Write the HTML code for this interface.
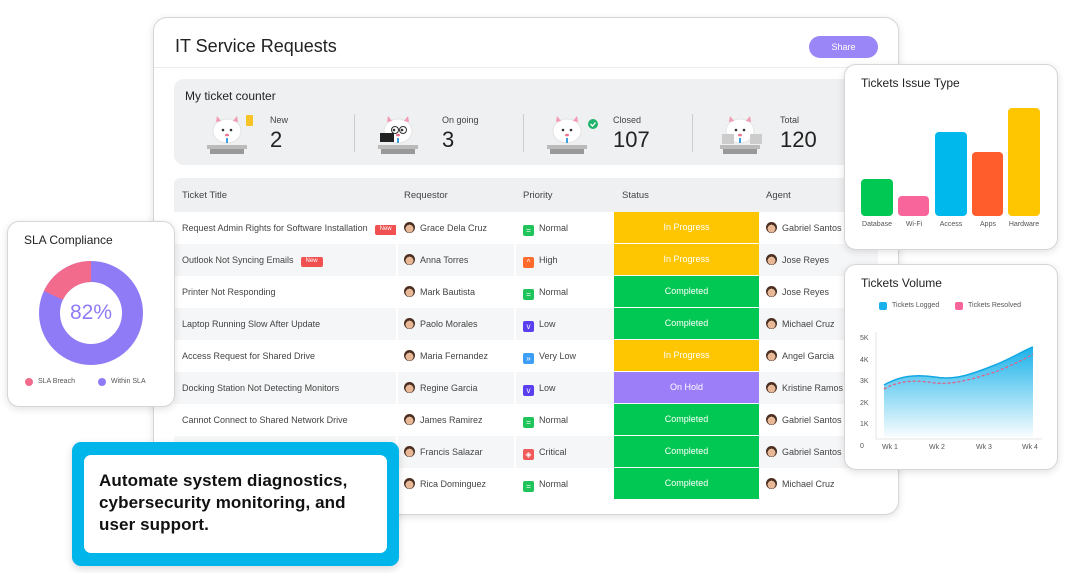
<!DOCTYPE html>
<html><head><meta charset="utf-8"><style>
*{margin:0;padding:0;box-sizing:border-box}
body{width:1065px;height:573px;background:#fff;font-family:"Liberation Sans",sans-serif;position:relative;overflow:hidden;color:#323338}
.abs{position:absolute}
.card{position:absolute;background:#fff;border:1px solid #d6d6d8;border-radius:12px;box-shadow:0 2px 8px rgba(0,0,0,.12)}
.row{position:absolute;left:174px;width:704px;height:32px;font-size:9px;color:#444}
.row.alt{background:#f5f6f7}
.cell{position:absolute;top:0;height:32px;line-height:32px;white-space:nowrap}
.st{position:absolute;left:440px;width:145px;height:31px;top:0;line-height:31px;text-align:center;color:#fff;font-size:9px}
.av{display:inline-block;width:11px;height:11px;border-radius:50%;vertical-align:-2px;margin-right:5px;background:radial-gradient(circle at 50% 60%,#e8b896 0 45%,#4a2e22 46%)}
.pi{display:inline-block;width:11px;height:11px;border-radius:2px;vertical-align:-2px;margin-right:5px;color:#fff;font-size:8px;line-height:11px;text-align:center}
.new{display:inline-block;background:#f0504f;color:#fff;font-size:6px;line-height:9px;height:10px;padding:0 5px;border-radius:2px;margin-left:7px;vertical-align:1px}
.sep{position:absolute;top:0;width:2px;height:32px;background:#fff}
</style></head><body>

<div class="card" style="left:153px;top:17px;width:746px;height:498px;border-radius:14px"></div>
<div class="abs" style="left:175px;top:36px;font-size:18px;color:#222">IT Service Requests</div>
<div class="abs" style="left:809px;top:36px;width:69px;height:22px;border-radius:11px;background:#9b86f7;color:#fff;font-size:9px;line-height:22px;text-align:center">Share</div>
<div class="abs" style="left:154px;top:67px;width:744px;height:1px;background:#ececee"></div>

<div class="abs" style="left:174px;top:79px;width:700px;height:86px;background:#eff0f1;border-radius:10px"></div>
<div class="abs" style="left:185px;top:89px;font-size:12px;color:#222">My ticket counter</div>
<div class="abs" style="left:354px;top:114px;width:1px;height:38px;background:#ccc"></div>
<div class="abs" style="left:523px;top:114px;width:1px;height:38px;background:#ccc"></div>
<div class="abs" style="left:692px;top:114px;width:1px;height:38px;background:#ccc"></div>

<svg class="abs" style="left:0;top:0" width="1065" height="573">
 <defs><g id="m">
  <ellipse cx="22" cy="18" rx="14" ry="12" fill="#fff" stroke="#e4e4e4"/>
  <path d="M11 9 L12 3 L16 8Z M33 9 L32 3 L28 8Z" fill="#f39ab3"/>
  <circle cx="18" cy="17" r="1.3" fill="#333"/><circle cx="26" cy="17" r="1.3" fill="#333"/>
  <ellipse cx="22" cy="22" rx="2" ry="1.3" fill="#f07090"/>
  <rect x="21" y="25" width="2" height="5" fill="#3aa0e0"/>
  <rect x="2" y="32" width="40" height="4" fill="#bbb"/>
  <rect x="5" y="36" width="34" height="5" fill="#999"/>
 </g></defs>
 <use href="#m" x="205" y="113"/>
 <rect x="246" y="115" width="7" height="11" rx="1" fill="#f7c325"/>
 <use href="#m" x="376" y="113"/>
 <rect x="380" y="133" width="14" height="9" fill="#222"/>
 <circle cx="395" cy="130" r="3.5" fill="none" stroke="#333"/><circle cx="403" cy="130" r="3.5" fill="none" stroke="#333"/>
 <use href="#m" x="545" y="113"/>
 <circle cx="593" cy="124" r="5" fill="#1fb36b"/><path d="M590.5 124l2 2 3-3.5" stroke="#fff" stroke-width="1.3" fill="none"/>
 <use href="#m" x="718" y="113"/>
 <rect x="722" y="134" width="12" height="10" fill="#ccc"/><rect x="750" y="134" width="12" height="10" fill="#ccc"/>
</svg>
<div class="abs" style="left:270px;top:115px;font-size:9px;color:#444">New</div>
<div class="abs" style="left:270px;top:127px;font-size:22px;color:#222">2</div>
<div class="abs" style="left:442px;top:115px;font-size:9px;color:#444">On going</div>
<div class="abs" style="left:442px;top:127px;font-size:22px;color:#222">3</div>
<div class="abs" style="left:613px;top:115px;font-size:9px;color:#444">Closed</div>
<div class="abs" style="left:613px;top:127px;font-size:22px;color:#222">107</div>
<div class="abs" style="left:780px;top:115px;font-size:9px;color:#444">Total</div>
<div class="abs" style="left:780px;top:127px;font-size:22px;color:#222">120</div>

<div class="abs" style="left:174px;top:178px;width:704px;height:34px;background:#eff0f1;border-radius:6px 6px 0 0;font-size:9.5px;color:#444">
 <span class="abs" style="left:8px;top:12px">Ticket Title</span>
 <span class="abs" style="left:230px;top:12px">Requestor</span>
 <span class="abs" style="left:349px;top:12px">Priority</span>
 <span class="abs" style="left:448px;top:12px">Status</span>
 <span class="abs" style="left:592px;top:12px">Agent</span>
</div>

<div class="row" style="top:212px"><div class="cell" style="left:8px">Request Admin Rights for Software Installation<span class="new">New</span></div><div class="sep" style="left:222px"></div><div class="cell" style="left:230px"><span class="av"></span>Grace Dela Cruz</div><div class="sep" style="left:340px"></div><div class="cell" style="left:349px"><span class="pi" style="background:#1fc45a">=</span>Normal</div><div class="st" style="background:#fdc600">In Progress</div><div class="cell" style="left:592px"><span class="av"></span>Gabriel Santos</div></div>
<div class="row alt" style="top:244px"><div class="cell" style="left:8px">Outlook Not Syncing Emails<span class="new">New</span></div><div class="sep" style="left:222px"></div><div class="cell" style="left:230px"><span class="av"></span>Anna Torres</div><div class="sep" style="left:340px"></div><div class="cell" style="left:349px"><span class="pi" style="background:#ff6a2c">^</span>High</div><div class="st" style="background:#fdc600">In Progress</div><div class="cell" style="left:592px"><span class="av"></span>Jose Reyes</div></div>
<div class="row" style="top:276px"><div class="cell" style="left:8px">Printer Not Responding</div><div class="sep" style="left:222px"></div><div class="cell" style="left:230px"><span class="av"></span>Mark Bautista</div><div class="sep" style="left:340px"></div><div class="cell" style="left:349px"><span class="pi" style="background:#1fc45a">=</span>Normal</div><div class="st" style="background:#00c853">Completed</div><div class="cell" style="left:592px"><span class="av"></span>Jose Reyes</div></div>
<div class="row alt" style="top:308px"><div class="cell" style="left:8px">Laptop Running Slow After Update</div><div class="sep" style="left:222px"></div><div class="cell" style="left:230px"><span class="av"></span>Paolo Morales</div><div class="sep" style="left:340px"></div><div class="cell" style="left:349px"><span class="pi" style="background:#5a3ff0">v</span>Low</div><div class="st" style="background:#00c853">Completed</div><div class="cell" style="left:592px"><span class="av"></span>Michael Cruz</div></div>
<div class="row" style="top:340px"><div class="cell" style="left:8px">Access Request for Shared Drive</div><div class="sep" style="left:222px"></div><div class="cell" style="left:230px"><span class="av"></span>Maria Fernandez</div><div class="sep" style="left:340px"></div><div class="cell" style="left:349px"><span class="pi" style="background:#3d9ef5">»</span>Very Low</div><div class="st" style="background:#fdc600">In Progress</div><div class="cell" style="left:592px"><span class="av"></span>Angel Garcia</div></div>
<div class="row alt" style="top:372px"><div class="cell" style="left:8px">Docking Station Not Detecting Monitors</div><div class="sep" style="left:222px"></div><div class="cell" style="left:230px"><span class="av"></span>Regine Garcia</div><div class="sep" style="left:340px"></div><div class="cell" style="left:349px"><span class="pi" style="background:#5a3ff0">v</span>Low</div><div class="st" style="background:#9b7ef8">On Hold</div><div class="cell" style="left:592px"><span class="av"></span>Kristine Ramos</div></div>
<div class="row" style="top:404px"><div class="cell" style="left:8px">Cannot Connect to Shared Network Drive</div><div class="sep" style="left:222px"></div><div class="cell" style="left:230px"><span class="av"></span>James Ramirez</div><div class="sep" style="left:340px"></div><div class="cell" style="left:349px"><span class="pi" style="background:#1fc45a">=</span>Normal</div><div class="st" style="background:#00c853">Completed</div><div class="cell" style="left:592px"><span class="av"></span>Gabriel Santos</div></div>
<div class="row alt" style="top:436px"><div class="sep" style="left:222px"></div><div class="cell" style="left:230px"><span class="av"></span>Francis Salazar</div><div class="sep" style="left:340px"></div><div class="cell" style="left:349px"><span class="pi" style="background:#f05a5a">◈</span>Critical</div><div class="st" style="background:#00c853">Completed</div><div class="cell" style="left:592px"><span class="av"></span>Gabriel Santos</div></div>
<div class="row" style="top:468px"><div class="sep" style="left:222px"></div><div class="cell" style="left:230px"><span class="av"></span>Rica Dominguez</div><div class="sep" style="left:340px"></div><div class="cell" style="left:349px"><span class="pi" style="background:#1fc45a">=</span>Normal</div><div class="st" style="background:#00c853">Completed</div><div class="cell" style="left:592px"><span class="av"></span>Michael Cruz</div></div>

<div class="card" style="left:7px;top:221px;width:168px;height:186px"></div>
<div class="abs" style="left:24px;top:233px;font-size:12px;color:#222">SLA Compliance</div>
<svg class="abs" style="left:0;top:0" width="200" height="420">
 <circle cx="91" cy="313" r="41.5" fill="none" stroke="#8f7bf5" stroke-width="21"/>
 <circle cx="91" cy="313" r="41.5" fill="none" stroke="#f26b8c" stroke-width="21" stroke-dasharray="47 300" transform="rotate(-155 91 313)"/>
 <circle cx="29" cy="382" r="4" fill="#f26b8c"/><circle cx="102" cy="382" r="4" fill="#8f7bf5"/>
</svg>
<div class="abs" style="left:60px;top:301px;width:62px;text-align:center;font-size:21px;color:#8f7bf5">82%</div>
<div class="abs" style="left:38px;top:378px;font-size:7px;color:#555">SLA Breach</div>
<div class="abs" style="left:111px;top:378px;font-size:7px;color:#555">Within SLA</div>

<div class="card" style="left:844px;top:64px;width:214px;height:186px"></div>
<div class="abs" style="left:861px;top:76px;font-size:12px;color:#222">Tickets Issue Type</div>
<svg class="abs" style="left:0;top:0" width="1065" height="573">
 <rect x="861" y="179" width="32" height="37" rx="4" fill="#00c853"/>
 <rect x="898" y="196" width="31" height="20" rx="4" fill="#f7659a"/>
 <rect x="935" y="132" width="32" height="84" rx="4" fill="#00b8ec"/>
 <rect x="972" y="152" width="31" height="64" rx="4" fill="#ff5e2c"/>
 <rect x="1008" y="108" width="32" height="108" rx="4" fill="#fdc600"/>
</svg>
<div class="abs" style="left:857px;top:221px;width:40px;text-align:center;font-size:7px;color:#555">Database</div>
<div class="abs" style="left:894px;top:221px;width:40px;text-align:center;font-size:7px;color:#555">Wi-Fi</div>
<div class="abs" style="left:931px;top:221px;width:40px;text-align:center;font-size:7px;color:#555">Access</div>
<div class="abs" style="left:968px;top:221px;width:40px;text-align:center;font-size:7px;color:#555">Apps</div>
<div class="abs" style="left:1004px;top:221px;width:40px;text-align:center;font-size:7px;color:#555">Hardware</div>

<div class="card" style="left:844px;top:264px;width:214px;height:206px"></div>
<div class="abs" style="left:861px;top:276px;font-size:12px;color:#222">Tickets Volume</div>
<svg class="abs" style="left:0;top:0" width="1065" height="573">
 <defs><linearGradient id="g" x1="0" y1="0" x2="0" y2="1"><stop offset="0" stop-color="#1bb2ea"/><stop offset="1" stop-color="#1bb2ea" stop-opacity=".03"/></linearGradient></defs>
 <rect x="879" y="302" width="8" height="8" rx="2" fill="#18b1ea"/>
 <rect x="955" y="302" width="8" height="8" rx="2" fill="#f7659a"/>
 <line x1="876" y1="332" x2="876" y2="439" stroke="#e4e4e4"/>
 <line x1="876" y1="439" x2="1042" y2="439" stroke="#e4e4e4"/>
 <path d="M884 385 C900 376 915 374 935 377 C955 381 975 373 995 365 C1010 359 1025 350 1033 347 L1033 437 L884 437Z" fill="url(#g)"/>
 <path d="M884 385 C900 376 915 374 935 377 C955 381 975 373 995 365 C1010 359 1025 350 1033 347" stroke="#12a8e4" stroke-width="1.5" fill="none"/>
 <path d="M884 389 C900 380 915 380 935 383 C955 385 975 378 995 372 C1010 366 1025 359 1033 354" stroke="#e0608a" stroke-width="1.3" stroke-dasharray="3 2" fill="none"/>
</svg>
<div class="abs" style="left:892px;top:302px;font-size:7px;color:#555">Tickets Logged</div>
<div class="abs" style="left:968px;top:302px;font-size:7px;color:#555">Tickets Resolved</div>
<div class="abs" style="left:860px;top:328px;font-size:7px;color:#555;line-height:21.6px">5K<br>4K<br>3K<br>2K<br>1K<br>0</div>
<div class="abs" style="left:882px;top:444px;font-size:7px;color:#555">Wk 1</div>
<div class="abs" style="left:929px;top:444px;font-size:7px;color:#555">Wk 2</div>
<div class="abs" style="left:976px;top:444px;font-size:7px;color:#555">Wk 3</div>
<div class="abs" style="left:1022px;top:444px;font-size:7px;color:#555">Wk 4</div>

<div class="abs" style="left:72px;top:442px;width:327px;height:124px;background:#00b5ea;border-radius:9px;box-shadow:0 3px 8px rgba(0,0,0,.15)"></div>
<div class="abs" style="left:84px;top:455px;width:303px;height:98px;background:#fff;border-radius:7px"></div>
<div class="abs" style="left:99px;top:470px;font-size:17px;font-weight:bold;color:#111;line-height:22px;font-family:'Liberation Sans',sans-serif;letter-spacing:.1px">Automate system diagnostics,<br>cybersecurity monitoring, and<br>user support.</div>
</body></html>
